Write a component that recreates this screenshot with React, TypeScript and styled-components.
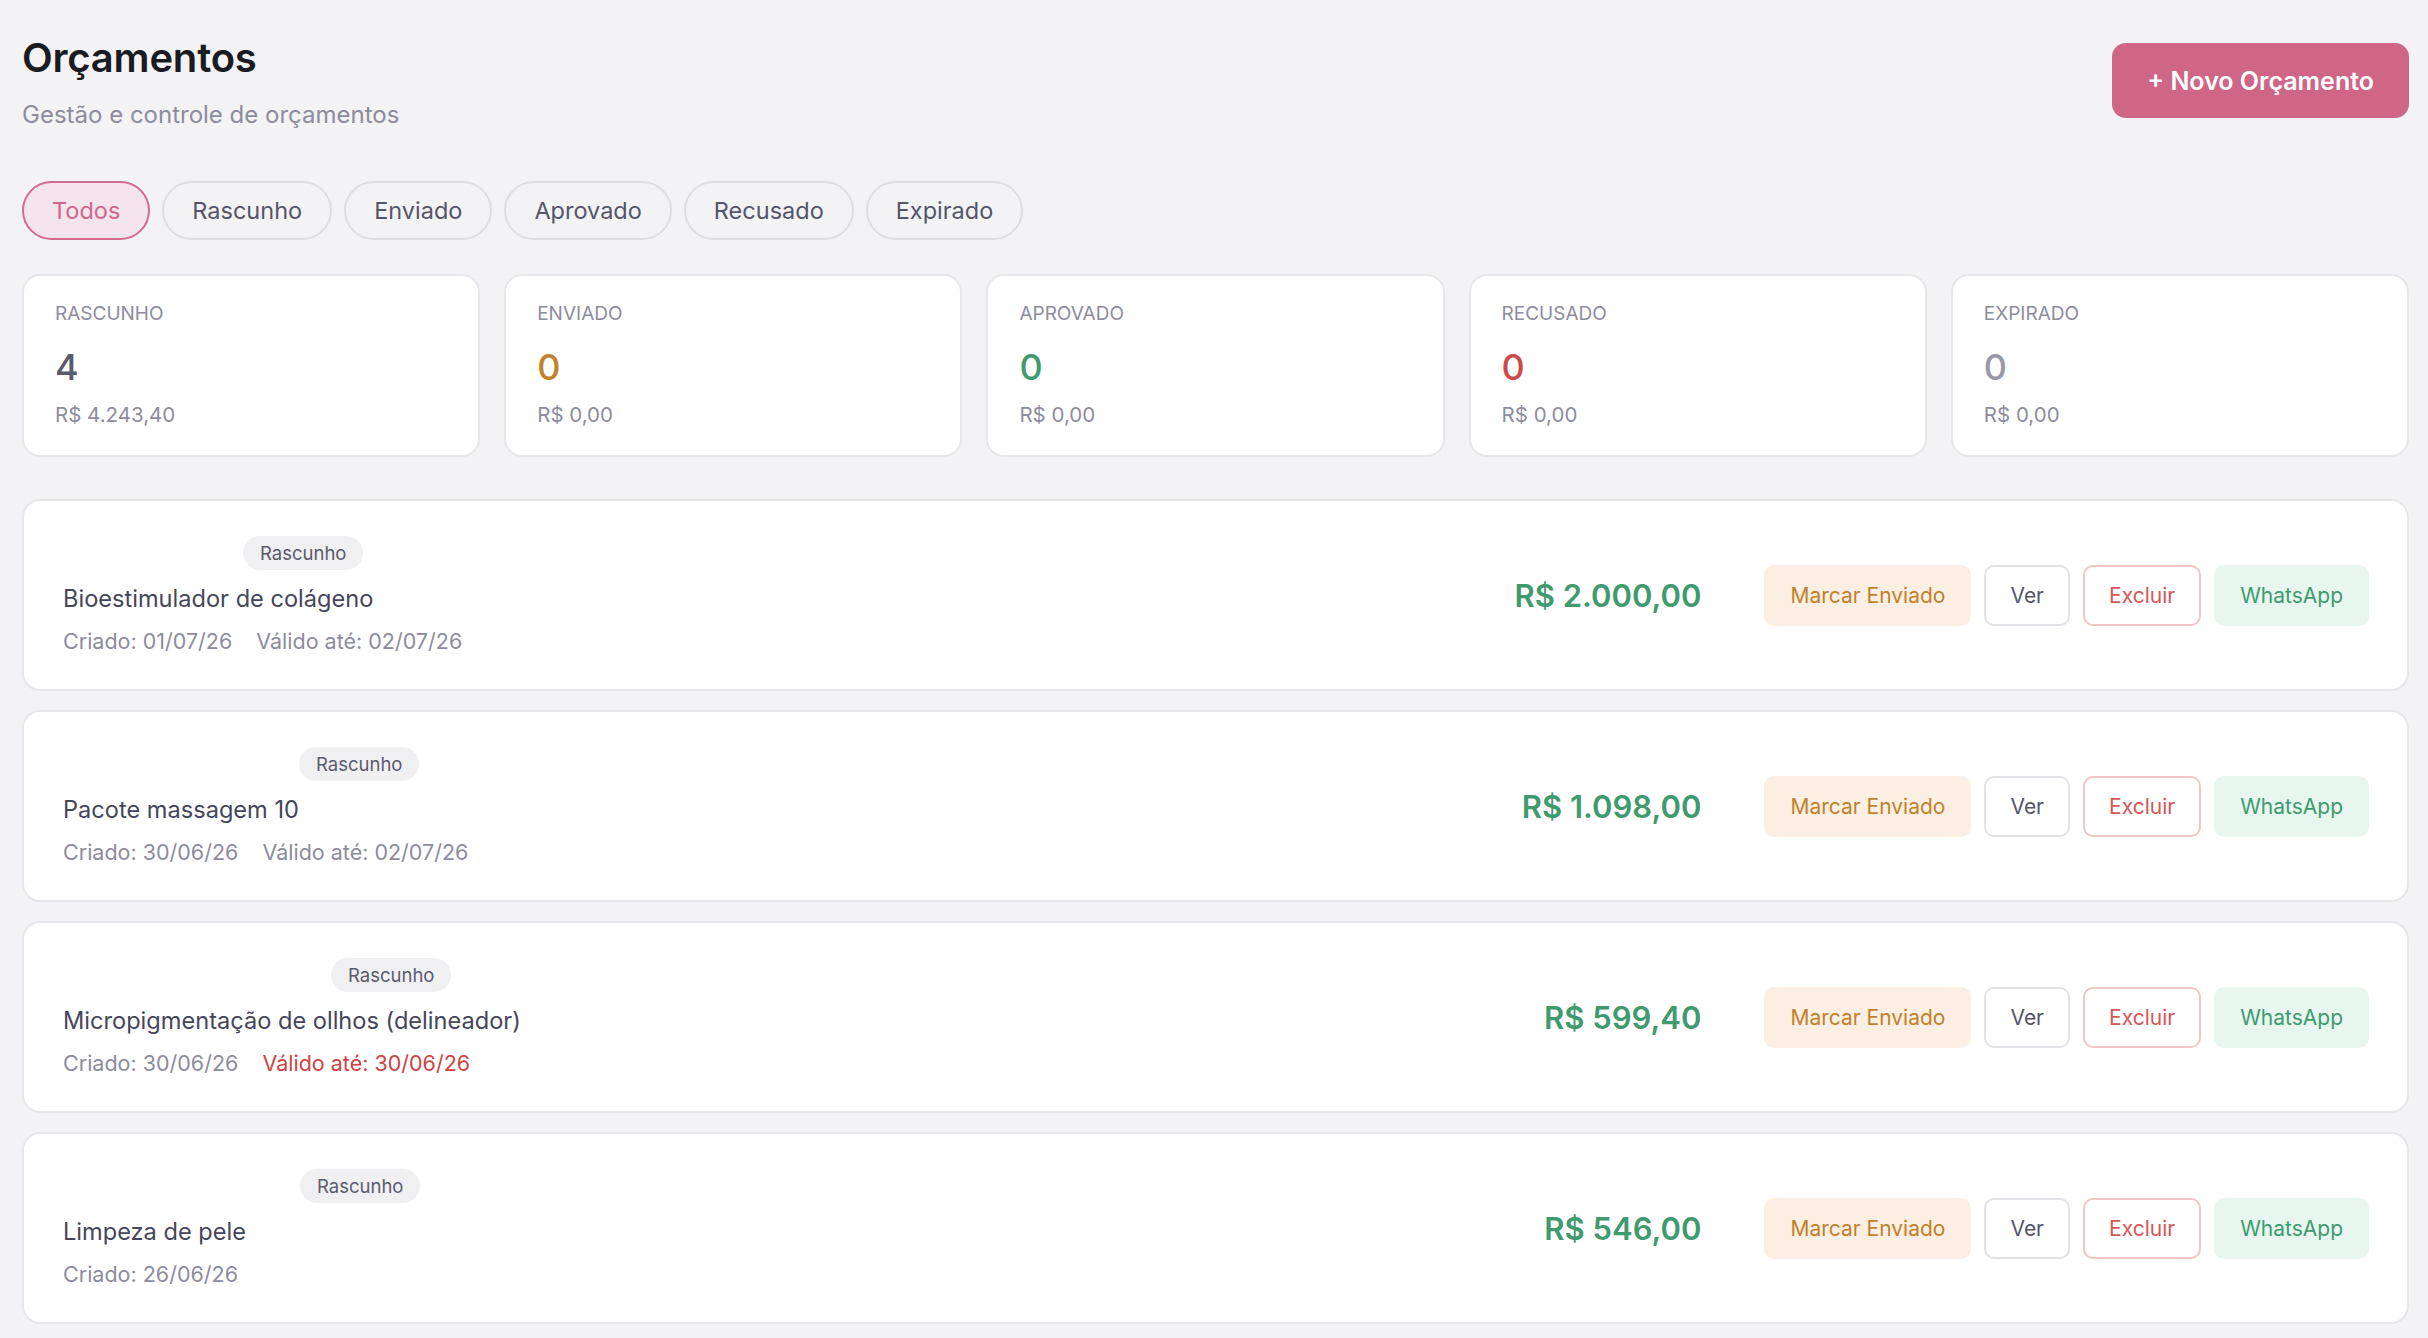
import styled, { createGlobalStyle } from "styled-components"

const GlobalStyle = createGlobalStyle`
  html, body {
    margin: 0;
    padding: 0;
    background: #f3f3f6;
    font-family: Inter, "Noto Sans", sans-serif;
    color: #4a4a5e;
  }
  * {
    box-sizing: border-box;
  }
`

const Page = styled.div`
  padding: 34px 19px 14px 22px;
  min-height: 1338px;
`

const Header = styled.header`
  display: flex;
  justify-content: space-between;
  align-items: flex-start;
`

const TitleBlock = styled.div`
  display: flex;
  flex-direction: column;
`

const Title = styled.h1`
  margin: 0;
  font-size: 40px;
  line-height: 48px;
  font-weight: 600;
  color: #1b1b24;
  letter-spacing: -0.2px;
`

const Subtitle = styled.p`
  margin: 18px 0 0;
  font-size: 24px;
  line-height: 30px;
  color: #8d8c9c;
`

const NewButton = styled.button`
  margin-top: 9px;
  height: 75px;
  padding: 0 35px;
  border: none;
  border-radius: 14px;
  background: #cf6688;
  color: #ffffff;
  font-family: inherit;
  font-size: 25px;
  font-weight: 600;
  cursor: pointer;
`

const Tabs = styled.nav`
  display: flex;
  gap: 12px;
  margin-top: 51px;
`

interface TabProps {
  active?: boolean
}
const Tab = styled.button<TabProps>`
  height: 59px;
  padding: 0 28px;
  border-radius: 30px;
  border: 2px solid ${props => (props.active ? "#d46a8c" : "#dedee2")};
  background: ${props => (props.active ? "#f4e4ec" : "transparent")};
  color: ${props => (props.active ? "#d0688b" : "#55556a")};
  font-family: inherit;
  font-size: 23.5px;
  cursor: pointer;
`

const StatsGrid = styled.section`
  display: grid;
  grid-template-columns: repeat(5, 1fr);
  gap: 24px;
  margin-top: 34px;
`

const StatCard = styled.div`
  height: 183px;
  padding: 27px 31px 0;
  background: #ffffff;
  border: 2px solid #e7e7eb;
  border-radius: 18px;
  display: flex;
  flex-direction: column;
`

const StatLabel = styled.span`
  font-size: 19px;
  line-height: 22px;
  color: #8d8c9c;
  text-transform: uppercase;
`

interface StatValueProps {
  tone: string
}
const StatValue = styled.span<StatValueProps>`
  margin-top: 22px;
  font-size: 36px;
  line-height: 40px;
  font-weight: 500;
  color: ${props => props.tone};
`

const StatAmount = styled.span`
  margin-top: 15px;
  font-size: 20.5px;
  line-height: 26px;
  color: #8d8c9c;
`

const List = styled.section`
  display: flex;
  flex-direction: column;
  gap: 19px;
  margin-top: 42px;
`

const QuoteCard = styled.article`
  height: 192px;
  padding: 0 38px 0 39px;
  background: #ffffff;
  border: 2px solid #e7e7eb;
  border-radius: 18px;
  display: flex;
  align-items: center;
`

const QuoteInfo = styled.div`
  flex: 1;
  display: flex;
  flex-direction: column;
  align-items: flex-start;
`

interface BadgeProps {
  offset: number
}
const Badge = styled.span<BadgeProps>`
  margin-left: ${props => `${props.offset}px`};
  height: 34px;
  padding: 0 17px;
  border-radius: 17px;
  background: #f0f0f3;
  color: #5a5a6c;
  font-size: 18.5px;
  line-height: 34px;
`

const QuoteName = styled.span`
  margin-top: 13px;
  font-size: 23.6px;
  line-height: 32px;
  color: #46465a;
`

const QuoteMeta = styled.div`
  margin-top: 12px;
  display: flex;
  gap: 24px;
  font-size: 21.5px;
  line-height: 28px;
  color: #8d8c9c;
`

interface MetaItemProps {
  warn?: boolean
}
const MetaItem = styled.span<MetaItemProps>`
  color: ${props => (props.warn ? "#cc4444" : "#8d8c9c")};
`

const Price = styled.span`
  font-size: 31px;
  font-weight: 600;
  color: #3f9a70;
  margin-right: 63px;
`

const Actions = styled.div`
  display: flex;
  gap: 13px;
`

interface ActionProps {
  variant: "send" | "view" | "delete" | "whatsapp"
}
const actionColors = {
  send: { bg: "#faefe2", border: "#faefe2", color: "#c27f2c" },
  view: { bg: "#ffffff", border: "#e3e3e7", color: "#55556a" },
  delete: { bg: "#ffffff", border: "#f1c6c6", color: "#d65656" },
  whatsapp: { bg: "#e7f6ee", border: "#e7f6ee", color: "#3f9a70" },
}
const ActionButton = styled.button<ActionProps>`
  height: 61px;
  padding: 0 24px;
  border-radius: 10px;
  border: 2px solid ${props => actionColors[props.variant].border};
  background: ${props => actionColors[props.variant].bg};
  color: ${props => actionColors[props.variant].color};
  font-family: inherit;
  font-size: 21px;
  cursor: pointer;
`

const stats = [
  { label: "Rascunho", count: 4, amount: "R$ 4.243,40", tone: "#5a5a6e" },
  { label: "Enviado", count: 0, amount: "R$ 0,00", tone: "#c2822c" },
  { label: "Aprovado", count: 0, amount: "R$ 0,00", tone: "#3f9a70" },
  { label: "Recusado", count: 0, amount: "R$ 0,00", tone: "#cc4a4a" },
  { label: "Expirado", count: 0, amount: "R$ 0,00", tone: "#9898a6" },
]

const quotes = [
  {
    name: "Bioestimulador de colágeno",
    created: "01/07/26",
    valid: "02/07/26",
    expired: false,
    price: "R$ 2.000,00",
    offset: 180,
  },
  {
    name: "Pacote massagem 10",
    created: "30/06/26",
    valid: "02/07/26",
    expired: false,
    price: "R$ 1.098,00",
    offset: 236,
  },
  {
    name: "Micropigmentação de ollhos (delineador)",
    created: "30/06/26",
    valid: "30/06/26",
    expired: true,
    price: "R$ 599,40",
    offset: 268,
  },
  {
    name: "Limpeza de pele",
    created: "26/06/26",
    valid: "",
    expired: false,
    price: "R$ 546,00",
    offset: 237,
  },
]

const filters = ["Todos", "Rascunho", "Enviado", "Aprovado", "Recusado", "Expirado"]

const App = () => {
  return (
    <Page>
      <GlobalStyle />
      <Header>
        <TitleBlock>
          <Title>Orçamentos</Title>
          <Subtitle>Gestão e controle de orçamentos</Subtitle>
        </TitleBlock>
        <NewButton>+ Novo Orçamento</NewButton>
      </Header>

      <Tabs>
        {filters.map((filter, index) => (
          <Tab key={filter} active={index === 0}>
            {filter}
          </Tab>
        ))}
      </Tabs>

      <StatsGrid>
        {stats.map(stat => (
          <StatCard key={stat.label}>
            <StatLabel>{stat.label}</StatLabel>
            <StatValue tone={stat.tone}>{stat.count}</StatValue>
            <StatAmount>{stat.amount}</StatAmount>
          </StatCard>
        ))}
      </StatsGrid>

      <List>
        {quotes.map(quote => (
          <QuoteCard key={quote.name}>
            <QuoteInfo>
              <Badge offset={quote.offset}>Rascunho</Badge>
              <QuoteName>{quote.name}</QuoteName>
              <QuoteMeta>
                <MetaItem>Criado: {quote.created}</MetaItem>
                {quote.valid && (
                  <MetaItem warn={quote.expired}>Válido até: {quote.valid}</MetaItem>
                )}
              </QuoteMeta>
            </QuoteInfo>
            <Price>{quote.price}</Price>
            <Actions>
              <ActionButton variant="send">Marcar Enviado</ActionButton>
              <ActionButton variant="view">Ver</ActionButton>
              <ActionButton variant="delete">Excluir</ActionButton>
              <ActionButton variant="whatsapp">WhatsApp</ActionButton>
            </Actions>
          </QuoteCard>
        ))}
      </List>
    </Page>
  )
}

export default App
